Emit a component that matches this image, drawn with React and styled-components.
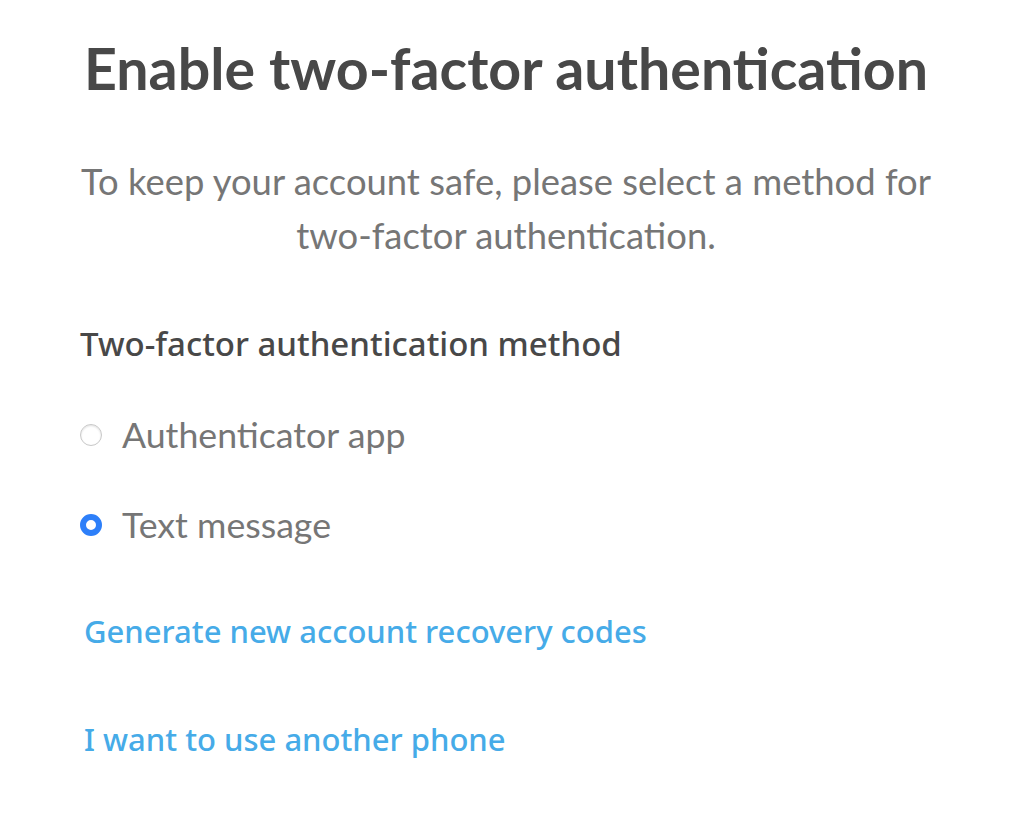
import React, { useState } from 'react';
import styled, { createGlobalStyle } from 'styled-components';

const GlobalStyle = createGlobalStyle`
  body {
    margin: 0;
    background: #ffffff;
    font-family: Lato, "Open Sans", sans-serif;
  }
`;

const Page = styled.main`
  padding: 36px 80px 0;
`;

const Title = styled.h1`
  margin: 0;
  text-align: center;
  white-space: nowrap;
  font-family: Lato, sans-serif;
  font-weight: 700;
  font-size: 57.3px;
  line-height: 64px;
  color: #484848;
`;

const Intro = styled.p`
  margin: 54px 0 0;
  text-align: center;
  font-family: Lato, sans-serif;
  font-size: 36.4px;
  line-height: 54px;
  color: #767676;
`;

const Section = styled.section`
  margin-top: 62px;
`;

const Heading = styled.h2`
  margin: 0;
  font-family: "Noto Sans", sans-serif;
  font-weight: 500;
  font-size: 33px;
  line-height: 40px;
  color: #484848;
`;

const Options = styled.div`
  display: flex;
  flex-direction: column;
  gap: 44px;
  margin-top: 48px;
`;

const Option = styled.label`
  display: flex;
  align-items: center;
  gap: 20px;
  cursor: pointer;
  font-family: Lato, sans-serif;
  font-size: 35.7px;
  line-height: 46px;
  color: #767676;
`;

const Radio = styled.span`
  box-sizing: border-box;
  width: 22px;
  height: 22px;
  border-radius: 50%;
  flex: none;
  border: ${p => (p.checked ? '6px solid #2d7ff9' : '1px solid #c8c8c8')};
  background: #ffffff;
  box-shadow: ${p => (p.checked ? 'none' : 'inset 0 1px 2px rgba(0,0,0,0.12)')};
`;

const Links = styled.div`
  display: flex;
  flex-direction: column;
  gap: 66px;
  margin-top: 62px;
  padding-left: 4px;
`;

const TextLink = styled.a`
  font-family: "Noto Sans", sans-serif;
  font-weight: 500;
  font-size: 31px;
  line-height: 42px;
  color: #46abe8;
  text-decoration: none;
`;

const methods = ['Authenticator app', 'Text message'];

const App = () => {
  const [method, setMethod] = useState('Text message');
  return (
    <Page>
      <GlobalStyle />
      <Title>Enable two-factor authentication</Title>
      <Intro>
        To keep your account safe, please select a method for
        <br />
        two-factor authentication.
      </Intro>
      <Section>
        <Heading>Two-factor authentication method</Heading>
        <Options>
          {methods.map(m => (
            <Option key={m} onClick={() => setMethod(m)}>
              <Radio checked={method === m} />
              {m}
            </Option>
          ))}
        </Options>
        <Links>
          <TextLink href="#">Generate new account recovery codes</TextLink>
          <TextLink href="#">I want to use another phone</TextLink>
        </Links>
      </Section>
    </Page>
  );
};

export default App;
